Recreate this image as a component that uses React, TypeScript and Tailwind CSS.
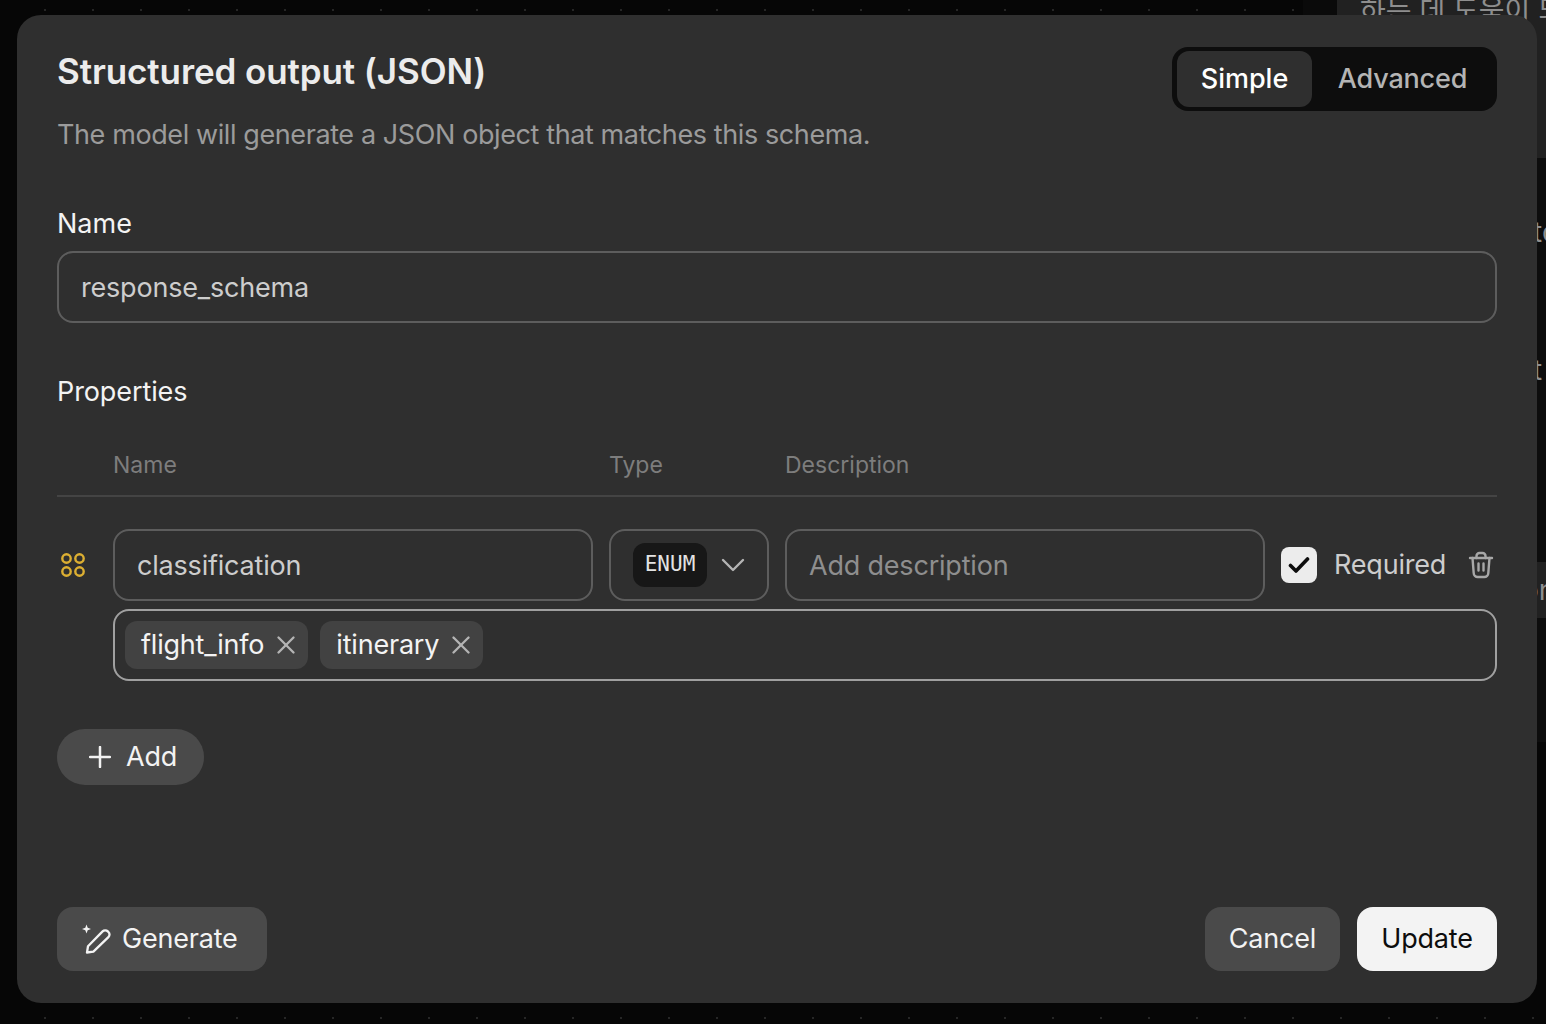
import { X } from 'lucide-react';

const FONT = "font-['Inter','Liberation_Sans','Noto_Sans_CJK_KR',sans-serif]";
const FIELD = 'h-[72px] rounded-2xl border-2 border-[#5d5d5d] bg-transparent px-[22px] text-[27px] tracking-[-0.2px] text-[#cdcdcd] outline-none placeholder:text-[#8e8e8e]';
const DOTS = 'bg-[radial-gradient(#262626_1px,transparent_1.5px)] bg-[size:48px_48px]';

function GripIcon() {
  return (
    <svg width="28" height="28" viewBox="0 0 28 28" fill="none" stroke="#dcaf32" strokeWidth="2.4">
      <circle cx="7.5" cy="7.5" r="4.2" />
      <circle cx="20.5" cy="7.5" r="4.2" />
      <circle cx="7.5" cy="20.5" r="4.2" />
      <circle cx="20.5" cy="20.5" r="4.2" />
    </svg>
  );
}

function TrashIcon() {
  return (
    <svg width="26" height="28" viewBox="0 0 26 28" fill="none" stroke="#a8a8a8" strokeWidth="2.4" strokeLinecap="round" strokeLinejoin="round">
      <path d="M2 7h22" />
      <path d="M8.5 7V5a3 3 0 0 1 3-3h3a3 3 0 0 1 3 3v2" />
      <path d="M4.5 7l1.2 15a4 4 0 0 0 4 4h6.6a4 4 0 0 0 4-4L21.5 7" />
      <path d="M10.5 12.5v7M15.5 12.5v7" />
    </svg>
  );
}

function SparkPencilIcon() {
  return (
    <svg width="30" height="30" viewBox="0 0 30 30" fill="none">
      <path d="M4.5 0.5l1.2 3.3 3.3 1.2-3.3 1.2-1.2 3.3-1.2-3.3L0 5l3.3-1.2z" fill="#f3f3f3" />
      <path
        d="M5 28.5l1-6.2L20.6 7.4a3.6 3.6 0 0 1 5.2 0l.6.6a3.6 3.6 0 0 1 0 5.2L11.4 27.7z"
        stroke="#f3f3f3"
        strokeWidth="2.3"
        strokeLinejoin="round"
      />
    </svg>
  );
}

function Chip({ label }: { label: string }) {
  return (
    <span className="flex h-12 items-center gap-[7px] rounded-xl bg-[#424242] pl-4 pr-[7px] text-[27px] tracking-[-0.2px] text-[#f3f3f3]">
      {label}
      <X size={30} strokeWidth={1.9} className="text-[#b4b4b4]" />
    </span>
  );
}

export default function App() {
  return (
    <div className={`${FONT} relative h-[1024px] w-[1546px] overflow-hidden bg-[#060606]`}>
      {/* page behind the dialog */}
      <div className="flex h-[742px]">
        <div className={`${DOTS} w-[1303px] bg-[position:21px_-14px]`} />
        <div className="w-[34px] bg-[#0a0a0a]" />
        <div className="flex flex-1 flex-col overflow-hidden bg-[#0d0d0d] text-[28px] leading-[38px] text-[#8e8e8e]">
          <div className="h-[158px] bg-[#212121] pl-[23px]">
            <p className="-mt-[8px] whitespace-nowrap">하는 데 도움이 되</p>
          </div>
          <div className="h-[404px] pl-[196px]">
            <p className="mt-[55px]">to</p>
            <p className="mt-[100px]">t</p>
          </div>
          <div className="h-14 bg-[#212121] pl-[185px] leading-[56px]">on</div>
        </div>
      </div>
      <div className={`${DOTS} h-[282px] bg-[position:21px_12px]`} />

      {/* dialog */}
      <div className="absolute left-[17px] top-[15px] flex h-[988px] w-[1520px] flex-col rounded-[24px] bg-[#2f2f2f] px-10 pb-8 pt-8">
        <div className="flex items-start justify-between">
          <div>
            <h1 className="text-[35px] font-semibold leading-[48px] tracking-[-0.1px] text-[#ececec]">Structured output (JSON)</h1>
            <p className="mt-[21px] text-[27px] leading-[38px] tracking-[-0.4px] text-[#9b9b9b]">
              The model will generate a JSON object that matches this schema.
            </p>
          </div>
          <div className="flex h-16 w-[325px] items-center rounded-2xl bg-[#0d0d0d] p-1 pl-[5px] text-[27px] font-medium">
            <span className="flex h-14 w-[135px] items-center justify-center rounded-xl bg-[#2f2f2f] text-white">Simple</span>
            <span className="flex h-14 flex-1 items-center justify-center tracking-[-0.2px] text-[#b4b4b4]">Advanced</span>
          </div>
        </div>

        <label className="mt-[52px] text-[27px] leading-[36px] text-[#f3f3f3]">Name</label>
        <input className={`${FIELD} mt-[9px] w-full`} defaultValue="response_schema" />

        <h2 className="mt-[51px] text-[27px] leading-[36px] tracking-[-0.1px] text-[#f3f3f3]">Properties</h2>

        <div className="mt-10 grid grid-cols-[40px_480px_160px_480px_1fr] gap-x-4 border-b-2 border-[#444444] pb-[15px] text-[23px] leading-[30px] text-[#7d7d7d]">
          <span />
          <span>Name</span>
          <span>Type</span>
          <span>Description</span>
        </div>

        <div className="mt-8 grid grid-cols-[40px_480px_160px_480px_1fr] items-center gap-x-4 gap-y-2">
          <span className="pl-[2px]">
            <GripIcon />
          </span>
          <input className={`${FIELD} w-full`} defaultValue="classification" />
          <div className="flex h-[72px] items-center justify-between rounded-2xl border-2 border-[#5d5d5d] pl-[22px] pr-[22px]">
            <span className="flex h-11 w-[74px] items-center justify-center rounded-xl bg-[#171717] font-['DejaVu_Sans_Mono',monospace] text-[21px] text-[#e3e3e3]">
              ENUM
            </span>
            <svg width="24" height="14" viewBox="0 0 24 14" fill="none" stroke="#b4b4b4" strokeWidth="2.4" strokeLinecap="round" strokeLinejoin="round">
              <path d="M2 2l10 10L22 2" />
            </svg>
          </div>
          <input className={`${FIELD} w-full`} placeholder="Add description" />
          <div className="flex items-center">
            <span className="flex h-9 w-9 items-center justify-center rounded-lg bg-[#ececec]">
              <svg width="22" height="18" viewBox="0 0 22 18" fill="none" stroke="#0d0d0d" strokeWidth="3.6" strokeLinecap="round" strokeLinejoin="round">
                <path d="M2.5 9.5l5.5 5.5L19.5 3" />
              </svg>
            </span>
            <span className="ml-[17px] text-[27px] tracking-[-0.2px] text-[#cdcdcd]">Required</span>
            <span className="ml-auto pr-[3px]">
              <TrashIcon />
            </span>
          </div>

          <div className="col-span-4 col-start-2 flex h-[72px] items-center gap-3 rounded-2xl border-2 border-[#a0a0a0] pl-[10px]">
            <Chip label="flight_info" />
            <Chip label="itinerary" />
          </div>
        </div>

        <button className="mt-12 flex h-14 w-[147px] items-center gap-[15px] rounded-full bg-[#4a4a4a] pl-[32px] text-[27px] tracking-[-0.2px] text-[#f3f3f3]">
          <svg width="22" height="22" viewBox="0 0 22 22" fill="none" stroke="#f3f3f3" strokeWidth="2.5" strokeLinecap="round">
            <path d="M11 1v20M1 11h20" />
          </svg>
          Add
        </button>

        <div className="mt-auto flex items-center">
          <button className="flex h-16 w-[210px] items-center gap-[10px] rounded-2xl bg-[#4a4a4a] pl-[25px] text-[27px] tracking-[-0.2px] text-[#f3f3f3]">
            <SparkPencilIcon />
            Generate
          </button>
          <button className="ml-auto h-16 w-[135px] rounded-2xl bg-[#4a4a4a] text-[27px] tracking-[-0.2px] text-[#f3f3f3]">Cancel</button>
          <button className="ml-[17px] h-16 w-[140px] rounded-2xl bg-[#f3f3f3] text-[27px] tracking-[-0.2px] text-[#0d0d0d]">Update</button>
        </div>
      </div>
    </div>
  );
}
